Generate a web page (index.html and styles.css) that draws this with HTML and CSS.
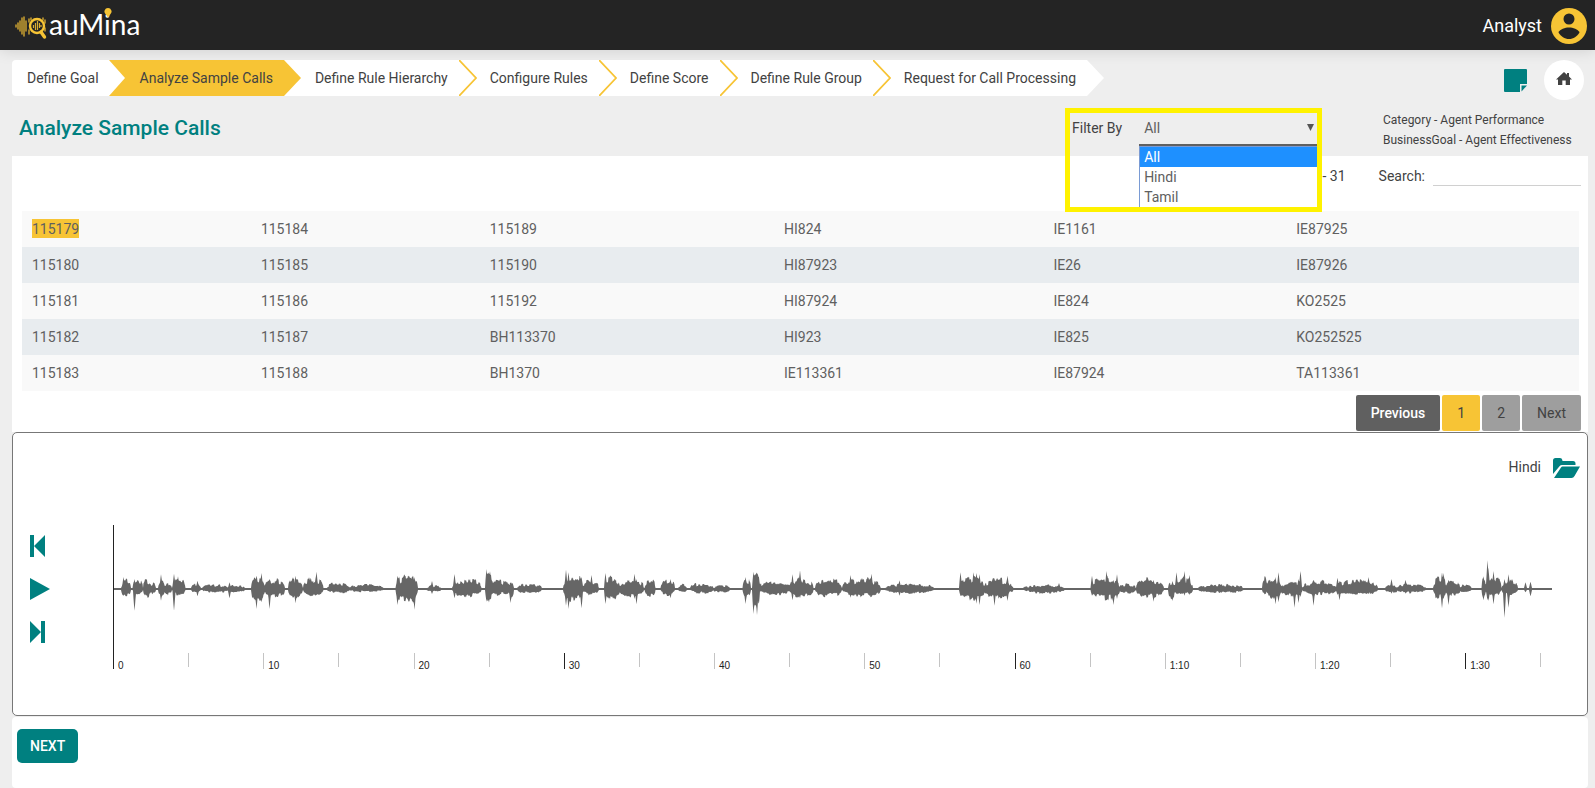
FILE: index.html
```html
<!DOCTYPE html>
<html lang="en">
<head>
<meta charset="utf-8">
<title>auMina - Analyze Sample Calls</title>
<link rel="stylesheet" href="styles.css">
</head>
<body>
<header class="topbar">
  <a class="logo" href="#">
    <svg class="logo-mark" width="32" height="32" viewBox="0 0 32 32" aria-hidden="true">
      <g stroke="#c79f31" stroke-width="1.5" stroke-linecap="round" fill="none">
        <path d="M1 15v2M3 13v6M5 11v10M7 8v16M9 7v19M11 11v10"/>
        <path d="M14 9v3M14 20v4M30 10v3M30 18v3M16 8v2M28 8v2"/>
      </g>
      <circle cx="22" cy="16" r="7" fill="none" stroke="#f7c435" stroke-width="2.4"/>
      <path d="M18.500 15v3M20.500 13v7M22.500 11v9M24.500 13v5M26 15v2" stroke="#d9ad33" stroke-width="1.200" fill="none"/>
      <path d="M26 22l3.500 5" stroke="#f7c435" stroke-width="3.400" stroke-linecap="round"/>
    </svg>
    <span class="logo-text">auM<span class="logo-i">i<svg class="logo-dot" width="8" height="10" viewBox="0 0 8 10" aria-hidden="true"><path d="M4 0a3.500 3.500 0 0 1 2.500 6L4 9.500 1.500 6A3.500 3.500 0 0 1 4 0z" fill="#f7c435"/></svg></span>na</span>
  </a>
  <div class="user">
    <span>Analyst</span>
    <svg width="36" height="36" viewBox="0 0 36 36" aria-hidden="true">
      <circle cx="18" cy="18" r="18" fill="#f7c435"/>
      <circle cx="18" cy="11" r="5.500" fill="#242424"/>
      <path d="M7.500 24.500C9 21 14 19.500 18 19.500s9 1.500 10.500 5C26 28.500 22.500 31 18 31S10 28.500 7.500 24.500z" fill="#242424"/>
    </svg>
  </div>
</header>

<div class="steps-row">
  <nav aria-label="Steps">
    <ol class="steps">
      <li class="step"><a href="#">Define Goal</a><svg class="tip" width="18" height="36" viewBox="0 0 18 36" aria-hidden="true"><path d="M0 0l16 18L0 36z" fill="#fff"/></svg></li>
      <li class="step active"><a href="#" aria-current="step">Analyze Sample Calls</a><svg class="tip" width="18" height="36" viewBox="0 0 18 36" aria-hidden="true"><path d="M0 0l17 18L0 36z" fill="#f7c435"/></svg></li>
      <li class="step"><a href="#">Define Rule Hierarchy</a><svg class="tip" width="18" height="36" viewBox="0 0 18 36" aria-hidden="true"><path d="M0 0l17 18L0 36" fill="#fff" stroke="#f7c435" stroke-width="1.800"/></svg></li>
      <li class="step"><a href="#">Configure Rules</a><svg class="tip" width="18" height="36" viewBox="0 0 18 36" aria-hidden="true"><path d="M0 0l17 18L0 36" fill="#fff" stroke="#f7c435" stroke-width="1.800"/></svg></li>
      <li class="step"><a href="#">Define Score</a><svg class="tip" width="18" height="36" viewBox="0 0 18 36" aria-hidden="true"><path d="M0 0l17 18L0 36" fill="#fff" stroke="#f7c435" stroke-width="1.800"/></svg></li>
      <li class="step"><a href="#">Define Rule Group</a><svg class="tip" width="18" height="36" viewBox="0 0 18 36" aria-hidden="true"><path d="M0 0l17 18L0 36" fill="#fff" stroke="#f7c435" stroke-width="1.800"/></svg></li>
      <li class="step"><a href="#">Request for Call Processing</a><svg class="tip" width="18" height="36" viewBox="0 0 18 36" aria-hidden="true"><path d="M0 0l17 18L0 36z" fill="#fff"/></svg></li>
    </ol>
  </nav>
  <div class="tools">
    <button class="tool" type="button" aria-label="Notes">
      <svg width="23" height="23" viewBox="0 0 23 23"><path d="M1 0h21a1 1 0 0 1 1 1v14h-7v8H1a1 1 0 0 1-1-1V1a1 1 0 0 1 1-1z" fill="#008080"/><path d="M17.500 16.500H23L17.500 22.500z" fill="#008080"/></svg>
    </button>
    <button class="tool home" type="button" aria-label="Home">
      <svg width="16" height="13" viewBox="0 0 16 13"><path d="M8 0l3 2.800V1h2v3.600L16 7.500h-2V13H9.700V8.500H6.300V13H2V7.500H0z" fill="#424242"/></svg>
    </button>
  </div>
</div>

<div class="heading">
  <h1>Analyze Sample Calls</h1>
  <div class="filter">
    <label for="lang">Filter By</label>
    <div class="select-wrap">
      <select id="lang"><option>All</option><option>Hindi</option><option>Tamil</option></select>
      <svg class="caret" width="7" height="7" viewBox="0 0 7 7" aria-hidden="true"><path d="M0 0h7L3.500 7z" fill="#555"/></svg>
      <ul class="options" role="listbox" aria-label="Filter By">
        <li role="option" aria-selected="true" class="chosen">All</li>
        <li role="option" aria-selected="false">Hindi</li>
        <li role="option" aria-selected="false">Tamil</li>
      </ul>
    </div>
  </div>
  <div class="meta">
    <div>Category - Agent Performance</div>
    <div>BusinessGoal - Agent Effectiveness</div>
  </div>
</div>

<main>
  <section class="panel calls">
    <div class="search-row">
      <span class="count">- 31</span>
      <label for="search">Search:</label>
      <input id="search" type="search">
    </div>
    <table>
      <colgroup><col class="c1"><col class="c1"><col class="c3"><col class="c4"><col class="c5"><col class="c6"></colgroup>
      <tbody>
        <tr><td><mark>115179</mark></td><td>115184</td><td>115189</td><td>HI824</td><td>IE1161</td><td>IE87925</td></tr>
        <tr><td>115180</td><td>115185</td><td>115190</td><td>HI87923</td><td>IE26</td><td>IE87926</td></tr>
        <tr><td>115181</td><td>115186</td><td>115192</td><td>HI87924</td><td>IE824</td><td>KO2525</td></tr>
        <tr><td>115182</td><td>115187</td><td>BH113370</td><td>HI923</td><td>IE825</td><td>KO252525</td></tr>
        <tr><td>115183</td><td>115188</td><td>BH1370</td><td>IE113361</td><td>IE87924</td><td>TA113361</td></tr>
      </tbody>
    </table>
    <div class="pager">
      <button type="button" class="prev">Previous</button>
      <button type="button" class="current">1</button>
      <button type="button">2</button>
      <button type="button">Next</button>
    </div>
  </section>

  <section class="player">
    <div class="player-head">
      <span>Hindi</span>
      <button class="tool" type="button" aria-label="Open folder">
        <svg width="27" height="20" viewBox="0 0 27 20"><path d="M0 16V2.500Q0 0 2.500 0H7q2 0 2.300 2l.2 1H20q2.500 0 2.500 2.500V7H9Q7.500 7 6.500 8.200z" fill="#008080"/><path d="M9.500 8.500H27L21.500 18q-1 2-3 2H1L8 9.500Q8.700 8.500 9.500 8.500z" fill="#008080"/></svg>
      </button>
    </div>
    <div class="player-body">
      <div class="controls">
        <button class="tool" type="button" aria-label="Back"><svg width="20" height="22" viewBox="0 0 20 22"><path d="M0 0h4v22H0zM15 0v22L4 11z" fill="#008080"/></svg></button>
        <button class="tool" type="button" aria-label="Play"><svg width="20" height="22" viewBox="0 0 20 22"><path d="M0 0l20 11L0 22z" fill="#008080"/></svg></button>
        <button class="tool" type="button" aria-label="Forward"><svg width="20" height="22" viewBox="0 0 20 22"><path d="M0 0l11 11L0 22zM11 0h4v22h-4z" fill="#008080"/></svg></button>
      </div>
      <div class="track">
        <svg class="wave" viewBox="0 0 1438 128" preserveAspectRatio="none" role="img" aria-label="Waveform"><path id="wave" fill="#666"/></svg>
        <div class="timeline" id="timeline"></div>
      </div>
    </div>
  </section>

  <section class="panel footer">
    <button class="next" type="button">NEXT</button>
  </section>
</main>
<script src="wave.js"></script>
</body>
</html>
```

FILE: styles.css
```css
* { box-sizing: border-box; }

body {
  margin: 0;
  min-height: 100vh;
  display: flex;
  flex-direction: column;
  background: #eee;
  color: #424242;
  font-family: Roboto, "Liberation Sans", sans-serif;
  font-size: 14px;
  line-height: 20px;
}

button, input, select { font: inherit; color: inherit; }
a { color: inherit; text-decoration: none; }
svg { display: block; }

.topbar {
  display: flex;
  justify-content: space-between;
  align-items: center;
  height: 50px;
  padding: 0 8px 0 15px;
  background: #242424;
  color: #fff;
  box-shadow: 0 0 16px rgba(0, 0, 0, 0.14);
}
.logo { display: flex; align-items: center; gap: 2px; }
.logo-mark { margin-top: 2px; }
.logo-text { padding-bottom: 2px; font-family: Lato, sans-serif; font-size: 28px; line-height: 32px; }
.logo-i { position: relative; }
.logo-dot { position: absolute; left: 0; top: 1px; }
.user { display: flex; align-items: center; gap: 9px; font-size: 18px; padding-top: 2px; }

.steps-row {
  display: flex;
  justify-content: space-between;
  padding: 10px 11px 0 12px;
}
.steps {
  display: flex;
  margin: 0;
  padding: 0;
  list-style: none;
}
.step {
  position: relative;
  height: 36px;
  padding: 8px 11px 8px 31px;
  background: #fff;
}
.step:first-child { padding-left: 15px; padding-right: 10px; border-radius: 4px 0 0 4px; }
.step.active { background: #f7c435; }
.tip { position: absolute; left: 100%; top: 0; z-index: 1; }

.tools { display: flex; align-items: center; gap: 17px; }
.tool { padding: 0; border: 0; background: none; }
.home {
  display: grid;
  place-items: center;
  width: 40px;
  height: 40px;
  padding-bottom: 4px;
  border-radius: 50%;
  background: #fff;
}

.heading {
  display: flex;
  height: 56px;
  padding: 8px 19px 0;
}
h1 {
  flex: 1;
  margin: 0;
  padding-top: 8px;
  color: #008080;
  font-size: 21px;
  font-weight: 500;
  line-height: 24px;
}
.filter {
  z-index: 2;
  display: flex;
  gap: 17px;
  width: 257px;
  height: 104px;
  padding-left: 2px;
  border: 5px solid #fff200;
}
.filter label { padding-top: 5px; white-space: nowrap; }
.select-wrap { position: relative; flex: 1; }
select {
  width: 100%;
  height: 33px;
  padding: 0 5px 1px;
  border: 0;
  border-bottom: 2px solid #606060;
  border-radius: 0;
  background: transparent;
  appearance: none;
  color: #606060;
}
.caret { position: absolute; right: 3px; top: 11px; }
.options {
  position: absolute;
  inset: 33px 0 0 0;
  margin: 0;
  padding: 0;
  list-style: none;
  border: solid #7a9bd4;
  border-width: 1px 0 0 1px;
  background: #fff;
  color: #606060;
}
.options li { height: 20px; padding-left: 4px; }
.options .chosen { background: #1e90ff; color: #fff; }
.meta {
  width: 193px;
  margin-left: 61px;
  padding-top: 2px;
  font-size: 12px;
  white-space: nowrap;
}

main {
  flex: 1;
  display: flex;
  flex-direction: column;
  padding: 0 7px 0 12px;
}
.panel { background: #fff; }
.calls { padding: 0 7px 0 10px; }
.search-row {
  display: flex;
  justify-content: flex-end;
  height: 55px;
  padding: 10px 0 0;
}
.count { margin-right: 33px; }
.search-row label { margin-right: 8px; }
.search-row input {
  width: 148px;
  height: 20px;
  padding: 0;
  border: 0;
  border-bottom: 1px solid #d0d0d0;
  background: none;
  appearance: none;
}
table {
  width: calc(100% - 2px);
  table-layout: fixed;
  border-collapse: collapse;
  color: #606060;
}
.c1 { width: 14.7%; }
.c3 { width: 18.9%; }
.c4 { width: 17.3%; }
.c5 { width: 15.6%; }
.c6 { width: 18.8%; }
td { height: 36px; padding: 0 10px; }
tr { background: #f9f9f9; }
tr:nth-child(even) { background: #e8ecef; }
mark { padding: 2px 0 1px; background: #f7c435; color: inherit; }
.pager {
  display: flex;
  justify-content: flex-end;
  gap: 2px;
  padding: 4px 0 1px;
}
.pager button {
  height: 36px;
  padding: 0 15px;
  border: 0;
  border-radius: 2px;
  background: #9e9e9e;
}
.pager .prev { background: #606060; color: #fff; font-weight: 500; }
.pager .current { background: #f7c435; }

.player {
  padding: 24px 7px 46px 17px;
  border: 1px solid #777;
  border-radius: 5px;
  background: #fff;
}
.player-head {
  display: flex;
  justify-content: flex-end;
  align-items: flex-start;
  gap: 12px;
  height: 68px;
}
.player-head .tool { padding-top: 1px; }
.player-body { display: flex; gap: 63px; }
.controls {
  display: flex;
  flex-direction: column;
  gap: 21px;
  padding-top: 10px;
}
.track { flex: 1; margin-right: 28px; }
.wave {
  width: 100%;
  height: 128px;
  border-left: 1px solid #222;
}
.timeline { display: flex; height: 16px; }
.tick {
  flex: 0 0 5.221%;
  min-width: 0;
  height: 14px;
  padding: 8px 0 0 4px;
  border-left: 1px solid #c4c4c4;
  font: 10px/10px "Liberation Sans", sans-serif;
  color: #222;
}
.tick.labelled { height: 16px; }
.tick.major { border-color: #222; }

.footer { flex: 1; margin-top: 1px; padding: 12px 5px; border-radius: 4px; }
.next {
  height: 34px;
  padding: 0 13px;
  border: 0;
  border-radius: 5px;
  background: #008080;
  color: #fff;
  font-weight: 500;
}
```

FILE: wave.js
```js
// Speech bursts [start, end, up, down] and peaks [x, up, down],
// in thirds of a unit, each part counted from its own origin.
const parts = [
  { origin: -13,
    bursts: [[62,88,28,22],[96,124,28,20],[128,150,32,24],[150,164,20,15],[173,190,30,26],[190,212,20,18],[214,252,30,20],[272,298,16,14],[305,380,14,12],[380,430,12,12],[452,490,40,42],[492,550,30,26],[563,605,32,28],[608,666,34,22],[678,745,20,14],[745,848,14,10],[885,950,42,44],[978,1020,12,9],[1054,1140,34,24],[1153,1176,50,36],[1176,1200,24,20]],
    peaks: [[68,36,20],[100,30,65],[180,44,35],[219,46,65],[231,38,20],[290,25,22],[386,20,28],[466,40,60],[481,48,40],[505,30,60],[583,40,43],[646,52,15],[890,40,48],[940,36,62],[993,24,15],[1060,45,28],[1157,60,38]] },
  { origin: 367,
    bursts: [[13,30,50,36],[32,86,26,18],[86,98,20,28],[110,182,18,14],[248,305,44,38],[305,352,28,18],[370,415,38,30],[415,488,32,26],[492,522,32,24],[540,580,28,20],[592,616,14,10],[628,696,18,14],[698,745,12,12],[786,808,32,30],[814,836,44,60],[836,925,28,20],[925,996,32,26],[1003,1082,32,24],[1084,1198,32,24]],
    peaks: [[16,60,38],[88,18,42],[255,58,50],[262,50,60],[301,36,58],[331,42,16],[373,48,45],[460,46,30],[466,30,46],[568,30,28],[793,36,45],[818,52,75],[828,30,78],[934,44,34],[957,56,28],[1108,42,26],[1172,46,24]] },
  { origin: 747,
    bursts: [[72,218,16,14],[295,370,38,34],[370,445,32,30],[445,456,14,10],[488,610,13,13],[690,775,36,32],[775,824,16,14],[826,908,32,26],[922,940,24,28],[940,995,34,20],[1012,1148,14,12]],
    peaks: [[115,26,20],[298,50,20],[337,50,28],[347,48,44],[356,44,48],[400,30,50],[440,40,36],[594,18,8],[693,40,20],[736,54,28],[758,28,48],[768,44,30],[878,28,38],[935,24,36],[946,50,16],[970,54,20],[985,42,18]] },
  { origin: 1082,
    bursts: [[200,212,40,20],[212,255,34,32],[255,318,20,22],[320,420,24,18],[420,545,28,18],[568,605,12,12],[605,688,16,14],[712,750,40,30],[750,792,26,22],[792,825,14,10],[858,868,38,28],[870,915,36,22],[918,965,26,20]],
    peaks: [[248,50,40],[238,36,46],[296,20,56],[307,30,42],[313,54,24],[353,26,50],[424,34,18],[431,24,34],[517,36,16],[586,30,14],[628,28,14],[738,50,58],[742,48,30],[757,28,48],[862,38,34],[874,86,34],[878,58,36],[893,54,46],[926,30,86],[938,44,56],[950,30,14],[988,20,10],[1003,22,22]] }
];

const width = 1438;
const middle = 64;
const up = new Array(width * 2 + 1).fill(1);
const down = new Array(width * 2 + 1).fill(1);

let seed = 7;
function random() {
  seed = (seed * 16807) % 2147483647;
  return seed / 2147483647;
}

for (const { origin, bursts, peaks } of parts) {
  for (const [start, end, high, low] of bursts) {
    const from = Math.round((origin + start / 3) * 2);
    const to = Math.round((origin + end / 3) * 2);
    let rise = 1;
    let fall = 1;
    for (let i = from; i <= to; i++) {
      // A new level every two pixels keeps the small peaks apart.
      if ((i - from) % 4 === 0) {
        rise = 0.55 + 0.65 * random();
        fall = 0.6 + 0.55 * random();
      }
      const shape = Math.pow(Math.sin(Math.PI * (i - from + 0.5) / (to - from + 1)), 0.3) / 3;
      up[i] = Math.max(up[i], high * shape * rise * (0.8 + 0.2 * random()));
      down[i] = Math.max(down[i], low * shape * fall * (0.8 + 0.2 * random()));
    }
  }
  for (const [x, high, low] of peaks) {
    const at = Math.round((origin + x / 3) * 2);
    for (const [step, part] of [[-2, 0.45], [-1, 0.75], [0, 1], [1, 0.75], [2, 0.45]]) {
      up[at + step] = Math.max(up[at + step], high * part / 3);
      down[at + step] = Math.max(down[at + step], low * part / 3);
    }
  }
}

const upper = up.map((v, i) => `${i / 2} ${(middle - v).toFixed(1)}`);
const lower = down.map((v, i) => `${i / 2} ${(middle + v).toFixed(1)}`).reverse();
document.getElementById("wave").setAttribute("d", `M${upper.join("L")}L${lower.join("L")}z`);

const timeline = document.getElementById("timeline");
for (let s = 0; s <= 95; s += 5) {
  const tick = document.createElement("span");
  tick.className = "tick";
  if (s % 10 === 0) {
    tick.classList.add("labelled");
    tick.textContent = s > 60 ? `1:${s - 60}` : String(s);
  }
  if (s % 30 === 0) tick.classList.add("major");
  timeline.append(tick);
}
```
